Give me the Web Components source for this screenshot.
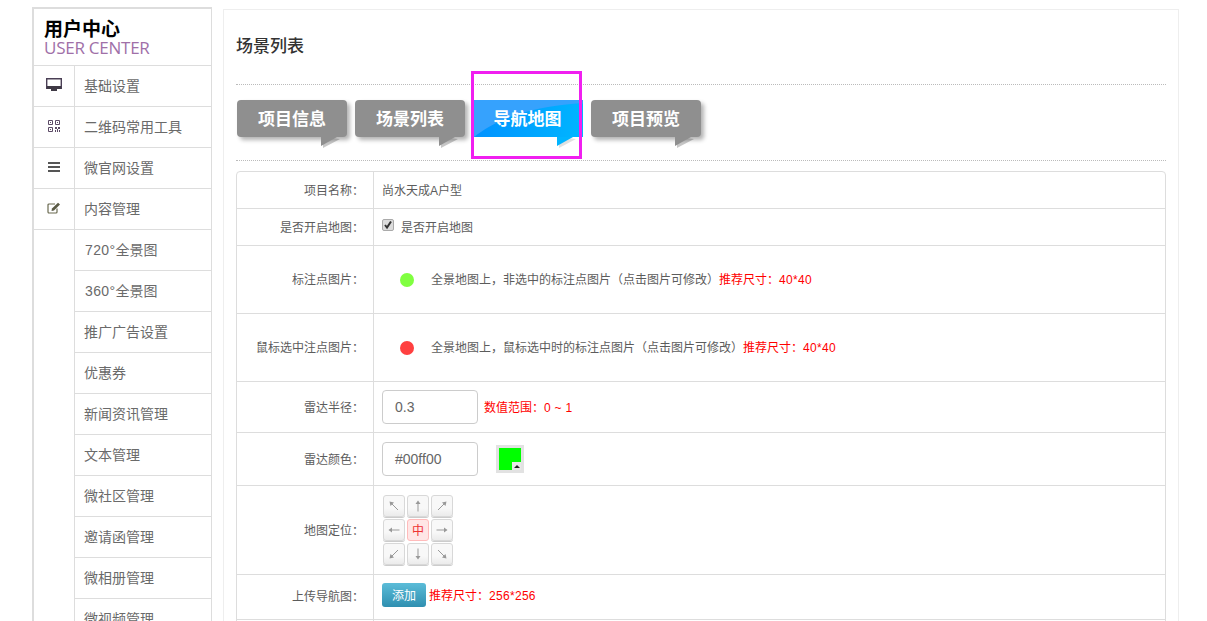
<!DOCTYPE html>
<html><head><meta charset="utf-8">
<style>
html,body{margin:0;padding:0;height:621px;overflow:hidden;background:#fff}
body{font-family:"Liberation Sans","Noto Sans CJK SC",sans-serif;color:#555}
app-shell{height:621px}
.r{color:#f00}
.n{letter-spacing:.3px}
.d{letter-spacing:.4px;margin-left:1px}
</style></head><body>
<template id="t-shell"><style>
:host{display:flex;align-items:flex-start;padding:7px 0 0 32px;gap:11px;position:relative;overflow:hidden;box-sizing:border-box;width:1207px}
</style><slot></slot></template>

<template id="t-side"><style>
:host{display:block;width:180px;box-sizing:border-box;border:2px solid #ddd;border-width:2px 1px 0 2px;flex:none}
.h{height:57px;box-sizing:border-box;padding:7px 0 0 10px;border-bottom:1px solid #ddd;border-right:1px solid #ddd;margin-right:-1px}
.a{font:700 19px/23px "Noto Sans CJK SC",sans-serif;color:#000}
.b{font:17px/16px "Open Sans",sans-serif;color:#a070a8;margin-top:1px;letter-spacing:-.25px}
</style><div class="h"><div class="a">用户中心</div><div class="b">USER CENTER</div></div><slot></slot></template>

<template id="t-item"><style>
:host{display:flex;height:41px;box-sizing:border-box;font:14px/40px "Liberation Sans","Noto Sans CJK SC",sans-serif;color:#6a6a6a}
.i{width:41px;flex:none;box-sizing:border-box;border-right:1px solid #ddd;display:flex;align-items:center;justify-content:center;padding:0 0 2px 0}
.t{flex:1;padding-left:9px;border-bottom:1px solid #ddd;white-space:nowrap}
:host([top]) .i{border-bottom:1px solid #ddd}
::slotted(svg){display:block}
</style><div class="i"><slot name="icon"></slot></div><div class="t"><slot></slot></div></template>

<template id="t-panel"><style>
:host{display:block;width:956px;box-sizing:border-box;border:1px solid #eee;border-bottom:0;margin-top:2px;padding:0 12px;flex:none;height:640px}
h2{font:500 17px/20px "Noto Sans CJK SC",sans-serif;color:#333;margin:0;padding:25px 0 29px;border-bottom:1px dotted #bbb}
.tabs{display:flex;gap:8px;padding:15px 0 14px 1px;border-bottom:1px dotted #bbb;height:46px;margin-bottom:10px}
</style><h2><slot name="title"></slot></h2><div class="tabs"><slot name="tabs"></slot></div><slot></slot></template>

<template id="t-tab"><style>
:host{display:block;position:relative;width:110px;height:37px;background:#8f8f8f;border-radius:4px;box-shadow:3px 3px 4px rgba(0,0,0,.3);color:#fff;font:700 17px/36px "Noto Sans CJK SC",sans-serif;text-align:center;flex:none}
.tail{position:absolute;left:84px;top:37px;display:block;overflow:visible}
.sheen{display:none;position:absolute;left:0;top:0}
span{position:relative}
:host([active]){background:linear-gradient(100deg,#0090ff 0,#00b6ff 100%);border-radius:0 4px 0 0;box-shadow:none;width:109px;margin-left:1px;box-sizing:border-box;padding-right:2px}
:host([active]) .sheen{display:block}
:host([active]) .tail{left:83px}
:host([active]) .sh{fill:rgba(0,0,0,.12)}
:host([active]) .tl{fill:#00b4ff}
</style>
<svg class="sheen" width="109" height="37" viewBox="0 0 109 37"><path d="M0 37C20 21 50 7 109 3V0H0Z" fill="#36a2fd"/></svg>
<svg class="tail" width="16" height="9" viewBox="0 0 16 9"><path class="sh" d="M2 11 19 2 2 0Z" fill="rgba(0,0,0,.22)"/><path class="tl" d="M0 9 16 0H0Z" fill="#8f8f8f"/></svg><span><slot></slot></span></template>

<template id="t-table"><style>
:host{display:block;border:1px solid #ddd;border-radius:4px;box-sizing:border-box;width:930px;font:12px/18px "Liberation Sans","Noto Sans CJK SC",sans-serif;color:#5c5c5c}
</style><slot></slot></template>

<template id="t-row"><style>
:host{display:flex;box-sizing:border-box;border-bottom:1px solid #ddd}
.l{width:137px;flex:none;box-sizing:border-box;border-right:1px solid #ddd;display:flex;align-items:center;justify-content:flex-end;padding:var(--lp,0) 9px 0 0;white-space:nowrap}
.c{flex:1;display:flex;align-items:center;padding:var(--cp,0) 0 0 8px;white-space:nowrap}
</style><div class="l"><slot name="label"></slot></div><div class="c"><slot></slot></div></template>

<template id="t-input"><style>
:host{display:flex;align-items:center;width:96px;height:34px;box-sizing:border-box;border:1px solid #ccc;border-radius:4px;padding-left:12px;font:14px "Liberation Sans",sans-serif;color:#666;flex:none}
</style><slot></slot></template>

<template id="t-dot"><style>
:host{display:block;width:14px;height:14px;border-radius:50%;background:var(--c);flex:none;margin:0 17px 0 18px}
</style></template>

<template id="t-swatch"><style>
:host{display:block;position:relative;width:28px;height:28px;box-sizing:border-box;background:#e2e2e2;padding:3px;flex:none;margin-left:18px}
i{display:block;width:22px;height:22px;background:#0f0}
b{position:absolute;right:3px;bottom:3px;width:9px;height:8px;background:#e8e8e8}
b::after{content:"";position:absolute;left:2px;top:3px;border:3px solid transparent;border-top:0;border-bottom:3px solid #222}
</style><i></i><b></b></template>

<template id="t-dpad"><style>
:host{display:grid;grid-template-columns:repeat(3,22px);grid-auto-rows:22px;gap:2px;margin:-1px 0 0 1px}
</style><slot></slot></template>

<template id="t-dir"><style>
:host{display:flex;align-items:center;justify-content:center;box-sizing:border-box;border:1px solid #d8d8d8;border-radius:3px;background:linear-gradient(#f8f8f8 60%,#ebebeb);font:12px "Noto Sans CJK SC",sans-serif;color:#888;box-shadow:0 1px 0 #ccc}
:host([on]){background:#ffe6e6;border-color:#fbb;color:#e33;box-shadow:none}
::slotted(svg){display:block}
</style><slot></slot></template>

<template id="t-btn"><style>
:host{display:block;width:44px;height:24px;border-radius:3px;background:linear-gradient(#5bbcd8,#2f8fb0);color:#fff;font:12px/23px "Noto Sans CJK SC",sans-serif;text-align:center;flex:none}
</style><slot></slot></template>

<template id="t-hl"><style>
:host{display:block;position:absolute;left:471px;top:71px;width:111px;height:88px;box-sizing:border-box;border:3px solid #f01ff0;pointer-events:none}
</style></template>

<app-shell>
<side-bar>
<nav-item top><svg slot="icon" width="16" height="14" viewBox="0 0 16 14"><path d="M.7.7h14.600v9.600H.7z" fill="#fff" stroke="#4a3f55" stroke-width="1.400"/><path d="M1 8h14v3H1zM5 11h6v2H5z" fill="#3f3a45"/></svg>基础设置</nav-item>
<nav-item top><svg slot="icon" width="12" height="12" viewBox="0 0 12 12" fill="none" stroke="#5c4a66"><path d="M.5.5h4v4h-4zM7.500.5h4v4h-4zM.5 7.500h4v4h-4z"/><path d="M2 2h1v1H2zM9 2h1v1H9zM2 9h1v1H2zM7 7h2v2H7zM10 7h2v2h-2zM9 9h1v3H9zM11 10h1v2h-1zM7 10h1v2H7z" fill="#5c4a66" stroke="none"/></svg>二维码常用工具</nav-item>
<nav-item top><svg slot="icon" width="12" height="10" viewBox="0 0 12 10" fill="#555"><path d="M0 0h12v2H0zM0 4h12v2H0zM0 8h12v2H0z"/></svg>微官网设置</nav-item>
<nav-item top><svg slot="icon" width="14" height="12" viewBox="0 0 14 12"><path d="M10 6.500V10a1 1 0 0 1-1 1H2a1 1 0 0 1-1-1V3a1 1 0 0 1 1-1h6" fill="none" stroke="#6a6a50" stroke-width="1.200"/><path d="M5 6.500 11 .8l2 1.800-6 5.900-2.500.5z" fill="#5a5a45"/></svg>内容管理</nav-item>
<nav-item><span class="d">720°</span>全景图</nav-item>
<nav-item><span class="d">360°</span>全景图</nav-item>
<nav-item>推广广告设置</nav-item>
<nav-item>优惠券</nav-item>
<nav-item>新闻资讯管理</nav-item>
<nav-item>文本管理</nav-item>
<nav-item>微社区管理</nav-item>
<nav-item>邀请函管理</nav-item>
<nav-item>微相册管理</nav-item>
<nav-item>微视频管理</nav-item>
</side-bar>
<main-panel>
<span slot="title">场景列表</span>
<tab-btn slot="tabs">项目信息</tab-btn>
<tab-btn slot="tabs">场景列表</tab-btn>
<tab-btn slot="tabs" active>导航地图</tab-btn>
<tab-btn slot="tabs">项目预览</tab-btn>
<form-table>
<form-row style="height:37px;--lp:2px;--cp:2px"><span slot="label">项目名称：</span>尚水天成A户型</form-row>
<form-row style="height:37px;--lp:2px;--cp:2px"><span slot="label">是否开启地图：</span><span style="display:block;width:12px;height:12px;box-sizing:border-box;background:#dcdcdc;border:1px solid #aaa;border-radius:2px;margin:-7px 7px 0 0;flex:none"><svg width="10" height="10" viewBox="0 0 10 10" style="display:block"><path d="M2 5l2 2.500L8 1.500" fill="none" stroke="#333" stroke-width="2"/></svg></span>是否开启地图</form-row>
<form-row style="height:68px"><span slot="label">标注点图片：</span><marker-dot style="--c:#80ff40"></marker-dot>全景地图上，非选中的标注点图片（点击图片可修改）<span class="r">推荐尺寸：<span class="n">40*40</span></span></form-row>
<form-row style="height:68px"><span slot="label">鼠标选中注点图片：</span><marker-dot style="--c:#ff4040"></marker-dot>全景地图上，鼠标选中时的标注点图片（点击图片可修改）<span class="r">推荐尺寸：<span class="n">40*40</span></span></form-row>
<form-row style="height:51px;--lp:2px"><span slot="label">雷达半径：</span><text-box>0.3</text-box><span class="r" style="margin:2px 0 0 6px">数值范围：<span class="n">0 ~ 1</span></span></form-row>
<form-row style="height:53px;--lp:2px"><span slot="label">雷达颜色：</span><text-box>#00ff00</text-box><color-swatch></color-swatch></form-row>
<form-row style="height:89px;--lp:2px"><span slot="label">地图定位：</span><dir-pad>
<dir-btn><svg width="12" height="12" viewBox="0 0 12 12" fill="#999" stroke="#999"><path d="M10 10 3 3" fill="none"/><path d="M1.500 1.500 6 2.500 2.500 6Z" stroke="none"/></svg></dir-btn>
<dir-btn><svg width="12" height="12" viewBox="0 0 12 12" fill="#999" stroke="#999"><path d="M6 11.500V3" fill="none"/><path d="M6 .5 8.500 4h-5Z" stroke="none"/></svg></dir-btn>
<dir-btn><svg width="12" height="12" viewBox="0 0 12 12" fill="#999" stroke="#999"><path d="M2 10 9 3" fill="none"/><path d="M10.500 1.500 9.500 6 6 2.500Z" stroke="none"/></svg></dir-btn>
<dir-btn><svg width="12" height="12" viewBox="0 0 12 12" fill="#999" stroke="#999"><path d="M11.500 6H3" fill="none"/><path d="M.5 6 4 3.500v5Z" stroke="none"/></svg></dir-btn>
<dir-btn on>中</dir-btn>
<dir-btn><svg width="12" height="12" viewBox="0 0 12 12" fill="#999" stroke="#999"><path d="M.5 6H9" fill="none"/><path d="M11.500 6 8 3.500v5Z" stroke="none"/></svg></dir-btn>
<dir-btn><svg width="12" height="12" viewBox="0 0 12 12" fill="#999" stroke="#999"><path d="M10 2 3 9" fill="none"/><path d="M1.500 10.500 2.500 6 6 9.500Z" stroke="none"/></svg></dir-btn>
<dir-btn><svg width="12" height="12" viewBox="0 0 12 12" fill="#999" stroke="#999"><path d="M6 .5V9" fill="none"/><path d="M6 11.500 8.500 8h-5Z" stroke="none"/></svg></dir-btn>
<dir-btn><svg width="12" height="12" viewBox="0 0 12 12" fill="#999" stroke="#999"><path d="M2 2l7 7" fill="none"/><path d="M10.500 10.500 6 9.500 9.500 6Z" stroke="none"/></svg></dir-btn>
</dir-pad></form-row>
<form-row style="height:45px"><span slot="label">上传导航图：</span><add-btn style="margin-top:-5px">添加</add-btn><span class="r" style="margin:-3px 0 0 3px">推荐尺寸：<span class="n">256*256</span></span></form-row>
<form-row style="height:40px"><span slot="label"></span></form-row>
</form-table>
</main-panel>
<hl-box></hl-box>
</app-shell>
<script>
const def=(n,t)=>customElements.define(n,class extends HTMLElement{constructor(){super();this.attachShadow({mode:'open'}).appendChild(document.getElementById(t).content.cloneNode(true))}});
[['app-shell','t-shell'],['side-bar','t-side'],['nav-item','t-item'],['main-panel','t-panel'],['tab-btn','t-tab'],['form-table','t-table'],['form-row','t-row'],['text-box','t-input'],['marker-dot','t-dot'],['color-swatch','t-swatch'],['dir-pad','t-dpad'],['dir-btn','t-dir'],['add-btn','t-btn'],['hl-box','t-hl']].forEach(a=>def(...a));
</script>
</body></html>
